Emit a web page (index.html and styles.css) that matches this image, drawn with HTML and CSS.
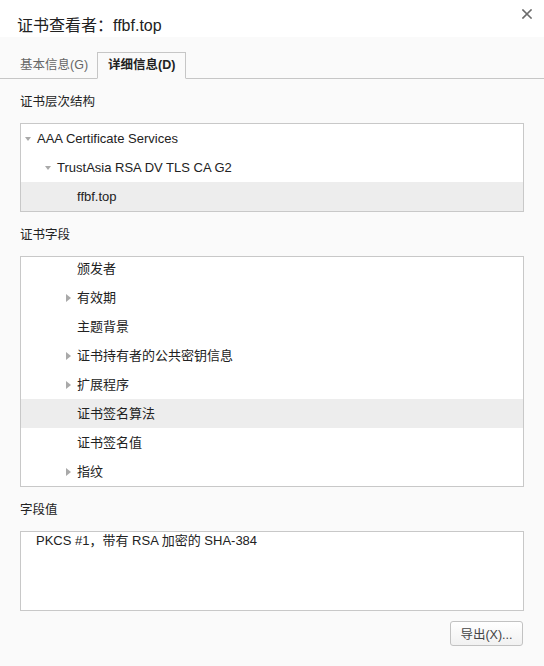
FILE: index.html
```html
<!DOCTYPE html>
<html lang="zh-CN">
<head>
<meta charset="utf-8">
<title>证书查看者</title>
<link rel="stylesheet" href="styles.css">
</head>
<body>
<div class="dialog">
  <div class="titlebar">
    <span class="title">证书查看者：ffbf.top</span>
    <span class="close">
      <svg width="10" height="10" viewBox="0 0 10 10"><path d="M1 1L9 9M9 1L1 9" stroke="#6b6b6b" stroke-width="1.6" stroke-linecap="square"/></svg>
    </span>
  </div>
  <div class="tabs">
    <div class="tab">基本信息(G)</div>
    <div class="tab active">详细信息(D)</div>
  </div>
  <div class="content">
    <div class="label">证书层次结构</div>
    <div class="box tree">
      <div class="row lvl0"><span class="tri down"></span>AAA Certificate Services</div>
      <div class="row lvl1"><span class="tri down"></span>TrustAsia RSA DV TLS CA G2</div>
      <div class="row lvl2 selected">ffbf.top</div>
    </div>
    <div class="label">证书字段</div>
    <div class="box fields">
      <div class="list">
        <div class="row frow"><span class="tri none"></span>颁发者</div>
        <div class="row frow"><span class="tri right"></span>有效期</div>
        <div class="row frow"><span class="tri none"></span>主题背景</div>
        <div class="row frow"><span class="tri right"></span>证书持有者的公共密钥信息</div>
        <div class="row frow"><span class="tri right"></span>扩展程序</div>
        <div class="row frow selected"><span class="tri none"></span>证书签名算法</div>
        <div class="row frow"><span class="tri none"></span>证书签名值</div>
        <div class="row frow"><span class="tri right"></span>指纹</div>
      </div>
    </div>
    <div class="label">字段值</div>
    <div class="box value">PKCS #1，带有 RSA 加密的 SHA-384</div>
    <div class="actions">
      <button class="btn">导出(X)...</button>
    </div>
  </div>
</div>
</body>
</html>
```

FILE: styles.css
```css
html, body {
  margin: 0;
  padding: 0;
}
body {
  background: #fafafa;
  font-family: "Liberation Sans", "Noto Sans CJK SC", sans-serif;
  font-size: 13px;
  color: #222;
}
.dialog {
  width: 544px;
  height: 666px;
  background: #fafafa;
}
.titlebar {
  height: 37px;
  background: #fff;
  display: flex;
  justify-content: space-between;
  align-items: flex-start;
  box-sizing: border-box;
  padding: 15px 12px 0 17px;
}
.title {
  font-size: 16px;
  line-height: 22px;
  color: #222;
}
.close {
  display: flex;
  margin-top: -6px;
}
.tabs {
  display: flex;
  padding-top: 15px;
  padding-left: 8px;
  border-bottom: 1px solid #c6c6c6;
  height: 26px;
}
.tab {
  height: 26px;
  line-height: 26px;
  padding: 0 9px 0 12px;
  color: #666;
  font-size: 12.5px;
  box-sizing: border-box;
}
.tab.active {
  color: #222;
  font-weight: bold;
  border: 1px solid #c6c6c6;
  border-bottom: 1px solid #fafafa;
  background: #fafafa;
  height: 27px;
  line-height: 25px;
  padding: 0 10px;
}
.content {
  padding: 0 20px;
  display: flex;
  flex-direction: column;
}
.label {
  line-height: 18px;
  margin-top: 14px;
  margin-bottom: 12px;
  font-size: 12.5px;
}
.box {
  background: #fff;
  border: 1px solid #c8c8c8;
}
.row {
  height: 29px;
  line-height: 29px;
  display: flex;
  align-items: center;
  white-space: nowrap;
}
.row.selected {
  background: #ededed;
}
.lvl0 { padding-left: 4px; }
.lvl1 { padding-left: 24px; }
.lvl2 { padding-left: 56px; }
.tri {
  width: 8px;
  height: 8px;
  display: inline-block;
  position: relative;
  flex: none;
  margin-right: 4px;
}
.tri.down::before {
  content: "";
  position: absolute;
  left: 0;
  top: 2px;
  border-left: 3.5px solid transparent;
  border-right: 3.5px solid transparent;
  border-top: 4px solid #a9a9a9;
}
.tri.right::before {
  content: "";
  position: absolute;
  left: 0;
  top: 0;
  border-top: 4px solid transparent;
  border-bottom: 4px solid transparent;
  border-left: 5px solid #a9a9a9;
}
.fields {
  height: 229px;
  overflow: hidden;
}
.list {
  margin-top: -3px;
}
.frow {
  padding-left: 45px;
}
.frow .tri {
  margin-right: 3px;
}
.value {
  height: 78px;
  box-sizing: content-box;
  padding: 0 15px;
  line-height: 18px;
}
.actions {
  display: flex;
  justify-content: flex-end;
  margin-top: 10px;
  padding-right: 1px;
}
.btn {
  width: 73px;
  height: 25px;
  border: 1px solid #c2c2c2;
  border-radius: 3px;
  background: linear-gradient(#ffffff, #f1f1f1);
  font-family: "Liberation Sans", "Noto Sans CJK SC", sans-serif;
  font-size: 12.5px;
  color: #444;
  padding: 0;
}
```
